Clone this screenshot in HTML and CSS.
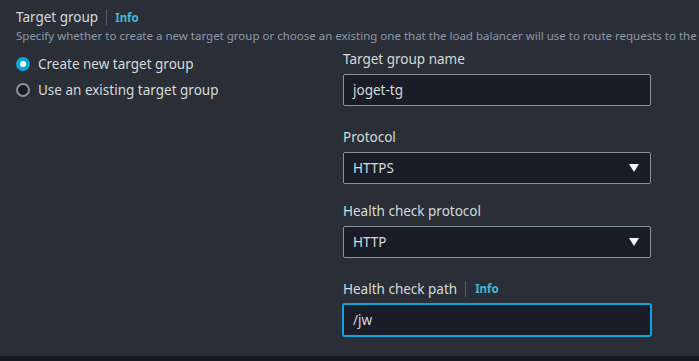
FILE: index.html
```html
<!DOCTYPE html>
<html lang="en">

<head>
  <meta charset="UTF-8">
  <meta name="viewport" content="width=device-width, initial-scale=1">
  <title>Target group</title>
  <link rel="stylesheet" href="styles.css">
</head>

<body>
  <section class="panel">
    <!-- Заголовок секции -->
    <div class="heading">
      <h2>Target group</h2>
      <span class="sep"></span>
      <a class="info" href="#">Info</a>
    </div>
    <p class="desc">Specify whether to create a new target group or choose an existing one that the load balancer will use to route requests to the targets.</p>

    <div class="grid">
      <!-- Выбор режима -->
      <div class="radios">
        <label class="radio">
          <span class="dot checked"></span>
          Create new target group
        </label>
        <label class="radio">
          <span class="dot"></span>
          Use an existing target group
        </label>
      </div>

      <!-- Поля формы -->
      <div class="fields">
        <div class="field">
          <div class="label">Target group name</div>
          <div class="control">joget-tg</div>
        </div>

        <div class="field">
          <div class="label">Protocol</div>
          <div class="control select">HTTPS<span class="caret"></span></div>
        </div>

        <div class="field">
          <div class="label">Health check protocol</div>
          <div class="control select">HTTP<span class="caret"></span></div>
        </div>

        <div class="field">
          <div class="label">Health check path<span class="sep"></span><a class="info" href="#">Info</a></div>
          <div class="control focus">/jw</div>
        </div>
      </div>
    </div>
  </section>
  <footer class="strip"></footer>
</body>

</html>
```

FILE: styles.css
```css
* {
  margin: 0;
  padding: 0;
  box-sizing: border-box;
}

body {
  font-family: 'Noto Sans', 'Open Sans', sans-serif;
  background: #2a2e37;
  color: #d5dbdb;
  height: 100vh;
  overflow: hidden;
  display: flex;
  flex-direction: column;
}

.panel {
  flex: 1;
  padding: 7px 0 0 16px;
  white-space: nowrap;
  overflow: hidden;
}

.heading {
  display: flex;
  align-items: center;
  height: 20px;
}

.heading h2 {
  font-size: 13.5px;
  font-weight: 400;
  color: #d5dbdb;
}

.sep {
  display: inline-block;
  width: 1px;
  height: 16px;
  background: #545b64;
  margin: 0 8px 0 8px;
  vertical-align: middle;
}

.info {
  font-size: 11.5px;
  font-weight: 700;
  color: #44b9d6;
  text-decoration: none;
}

.desc {
  font-size: 11.5px;
  line-height: 16px;
  color: #8d99a8;
  margin-top: 1px;
}

.grid {
  display: grid;
  grid-template-columns: 327px 308px;
  margin-top: 5px;
}

.radios {
  padding-top: 5px;
  display: flex;
  flex-direction: column;
  gap: 6px;
}

.radio {
  display: flex;
  align-items: center;
  gap: 8px;
  font-size: 13.5px;
  line-height: 20px;
  color: #d5dbdb;
}

.dot {
  width: 14px;
  height: 14px;
  border-radius: 50%;
  border: 2px solid #879596;
  background: #1a1c26;
  flex: none;
}

.dot.checked {
  border: 4.5px solid #0ea5d9;
  background: #fff;
}

.field {
  margin-bottom: 21px;
}

.field:nth-child(2) {
  margin-bottom: 17px;
}

.label {
  font-size: 13.5px;
  line-height: 20px;
  color: #d5dbdb;
  margin-bottom: 5px;
  display: flex;
  align-items: center;
}

.label .sep {
  margin: 0 9px 0 8px;
}

.control {
  position: relative;
  height: 32px;
  border: 1px solid #879596;
  border-radius: 2px;
  background: #1a1c28;
  font-size: 13.5px;
  line-height: 30px;
  padding-left: 9px;
  color: #d5dbdb;
}

.control.focus {
  border: 2px solid #0ea5d9;
  border-radius: 3px;
  margin: -1px -1px 0;
  height: 34px;
}

.caret {
  position: absolute;
  right: 11px;
  top: 11px;
  width: 0;
  height: 0;
  border-left: 5px solid transparent;
  border-right: 5px solid transparent;
  border-top: 8px solid #f2f3f3;
}

.strip {
  height: 5px;
  background: #16191f;
}
```
